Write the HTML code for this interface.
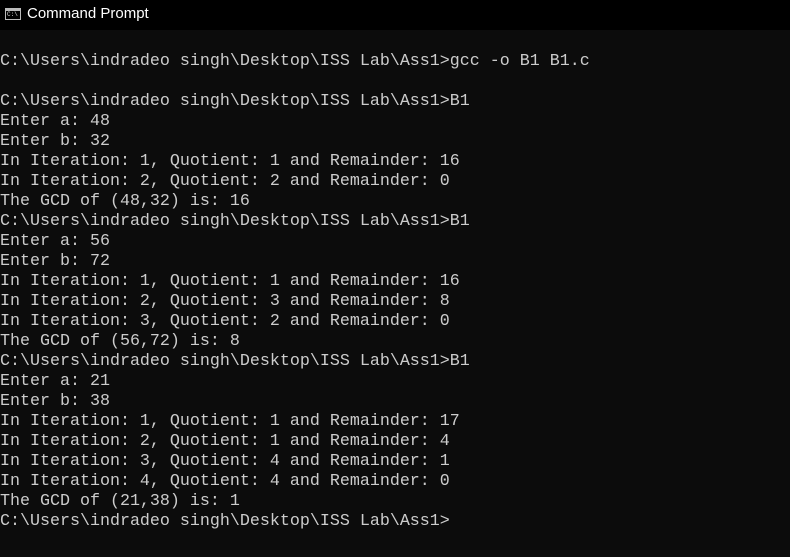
<!DOCTYPE html>
<html><head><meta charset="utf-8"><style>
html,body{margin:0;padding:0;width:790px;height:557px;overflow:hidden;background:#0c0c0c;}
#tb{height:30px;background:#000;position:relative;}
#tb .ic{position:absolute;left:5px;top:8px;width:16px;height:12px;border:1px solid #bbb;box-sizing:border-box;background:#000;}
#tb .ic:before{content:"";position:absolute;left:0;right:0;top:0;height:2px;background:#bbb;}
#tb .ic span{position:absolute;left:1px;top:2px;font:6px "Liberation Mono",monospace;color:#ddd;}
#tb .t{position:absolute;left:27px;top:5px;font:15px "Liberation Sans",sans-serif;color:#fff;}
pre{margin:0;padding:2px 0 0 0;font-family:"Liberation Mono",monospace;font-size:16.67px;line-height:20px;color:#cccccc;white-space:pre;}
</style></head><body>
<div id="tb"><div class="ic"><span>C:\</span></div><div class="t">Command Prompt</div></div>
<pre>

C:\Users\indradeo singh\Desktop\ISS Lab\Ass1&gt;gcc -o B1 B1.c

C:\Users\indradeo singh\Desktop\ISS Lab\Ass1&gt;B1
Enter a: 48
Enter b: 32
In Iteration: 1, Quotient: 1 and Remainder: 16
In Iteration: 2, Quotient: 2 and Remainder: 0
The GCD of (48,32) is: 16
C:\Users\indradeo singh\Desktop\ISS Lab\Ass1&gt;B1
Enter a: 56
Enter b: 72
In Iteration: 1, Quotient: 1 and Remainder: 16
In Iteration: 2, Quotient: 3 and Remainder: 8
In Iteration: 3, Quotient: 2 and Remainder: 0
The GCD of (56,72) is: 8
C:\Users\indradeo singh\Desktop\ISS Lab\Ass1&gt;B1
Enter a: 21
Enter b: 38
In Iteration: 1, Quotient: 1 and Remainder: 17
In Iteration: 2, Quotient: 1 and Remainder: 4
In Iteration: 3, Quotient: 4 and Remainder: 1
In Iteration: 4, Quotient: 4 and Remainder: 0
The GCD of (21,38) is: 1
C:\Users\indradeo singh\Desktop\ISS Lab\Ass1&gt;</pre>
</body></html>
